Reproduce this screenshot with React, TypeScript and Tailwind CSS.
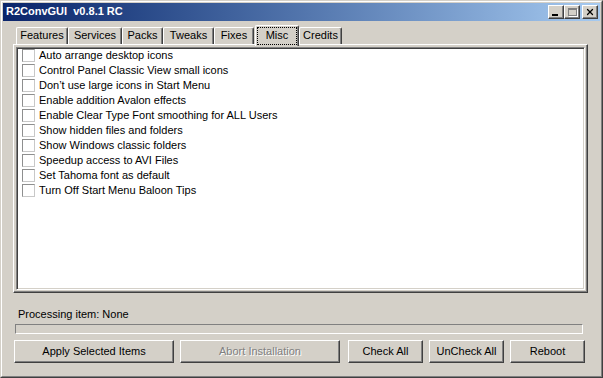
import { X } from 'lucide-react';

const TABS = ['Features', 'Services', 'Packs', 'Tweaks', 'Fixes', 'Misc', 'Credits'];
const TAB_WIDTHS: Record<string, string> = {
  Features: 'w-[52px]',
  Services: 'w-[54px]',
  Packs: 'w-[41px]',
  Tweaks: 'w-[51px]',
  Fixes: 'w-[40px]',
  Misc: 'w-[44px]',
  Credits: 'w-[43px]',
};

const ITEMS = [
  'Auto arrange desktop icons',
  'Control Panel Classic View small icons',
  'Don\u2019t use large icons in Start Menu',
  'Enable addition Avalon effects',
  'Enable Clear Type Font smoothing for ALL Users',
  'Show hidden files and folders',
  'Show Windows classic folders',
  'Speedup access to AVI Files',
  'Set Tahoma font as default',
  'Turn Off Start Menu Baloon Tips',
];

// raised 3d edge used by buttons
const raised =
  'border border-t-white border-l-white border-r-[#404040] border-b-[#404040] shadow-[inset_-1px_-1px_0_#808080,inset_1px_1px_0_#d4d0c8]';

function CaptionButton({ children }: { children: React.ReactNode }) {
  return (
    <div className={`w-[16px] h-[14px] bg-[#d4d0c8] flex items-center justify-center ${raised}`}>
      {children}
    </div>
  );
}

function Tab({ label, active }: { label: string; active?: boolean }) {
  if (active) {
    return (
      <div
        className={`${TAB_WIDTHS[label]} ml-[1px] h-[21px] -mb-[2px] relative z-10 bg-[#d4d0c8] border-t border-l border-white border-r border-r-[#404040] rounded-tl-[2px] rounded-tr-[2px] shadow-[inset_-1px_0_0_#808080] px-[1px] pt-[1px] pb-[1px] flex`}
      >
        <div className="flex-1 border border-dotted border-black flex items-center justify-center pb-[2px]">
          {label}
        </div>
      </div>
    );
  }
  return (
    <div
      className={`${TAB_WIDTHS[label]} h-[17px] bg-[#d4d0c8] border-t border-l border-white border-r border-r-[#404040] rounded-tl-[2px] rounded-tr-[2px] shadow-[inset_-1px_0_0_#808080] flex items-center justify-center pb-[1px]`}
    >
      {label}
    </div>
  );
}

function Button({ label, width, disabled }: { label: string; width: string; disabled?: boolean }) {
  return (
    <div
      className={`${width} h-[23px] bg-[#d4d0c8] flex items-center justify-center ${raised} ${
        disabled ? 'text-[#808080] [text-shadow:1px_1px_0_#ffffff]' : 'text-black'
      }`}
    >
      {label}
    </div>
  );
}

export default function App() {
  return (
    <div
      className="w-[603px] h-[378px] bg-[#d4d0c8] border border-t-[#d4d0c8] border-l-[#d4d0c8] border-r-[#404040] border-b-[#404040] text-[11px] text-black"
      style={{ fontFamily: '"Liberation Sans", Arial, sans-serif' }}
    >
      <div className="w-full h-full border border-t-white border-l-white border-r-[#808080] border-b-[#808080] p-[1px] flex flex-col">
        {/* Title bar */}
        <div className="h-[18px] bg-gradient-to-r from-[#0a246a] to-[#a6caf0] flex items-center pl-[3px] pr-[2px]">
          <span className="flex-1 text-white font-bold whitespace-pre leading-none pb-[1px]">R2ConvGUI  v0.8.1 RC</span>
          <CaptionButton>
            <div className="w-[6px] h-[2px] bg-black mt-[6px] -ml-[2px]" />
          </CaptionButton>
          <CaptionButton>
            <div className="w-[9px] h-[8px] border border-t-2 border-[#808080] shadow-[1px_1px_0_#ffffff] -mt-[1px]" />
          </CaptionButton>
          <div className="ml-[2px]">
            <CaptionButton>
              <X size={10} strokeWidth={3} className="text-black" />
            </CaptionButton>
          </div>
        </div>

        {/* Tabs */}
        <div className="flex items-end h-[19px] mt-[4px] ml-[13px]">
          {TABS.map((t) => (
            <Tab key={t} label={t} active={t === 'Misc'} />
          ))}
        </div>

        {/* Tab panel */}
        <div className="ml-[10px] w-[575px] h-[249px] border border-t-white border-l-white border-r-[#404040] border-b-[#404040] shadow-[inset_-1px_-1px_0_#808080,inset_1px_1px_0_#d4d0c8] p-[2px]">
          <div className="w-full h-full bg-white border border-t-[#808080] border-l-[#808080] border-r-white border-b-white shadow-[inset_1px_1px_0_#404040,inset_-1px_-1px_0_#d4d0c8] pl-[5px]">
            {ITEMS.map((item) => (
              <div key={item} className="h-[15px] flex items-center gap-[4px]">
                <div className="w-[13px] h-[13px] bg-white border border-[#8e8f8f] border-b-[#c8c8c8] border-r-[#c8c8c8]" />
                <span className="leading-none pb-[1px]">{item}</span>
              </div>
            ))}
          </div>
        </div>

        {/* Status */}
        <div className="ml-[15px] mt-[15px] h-[13px] leading-[13px]">Processing item: None</div>
        <div className="ml-[12px] mt-[3px] w-[568px] h-[10px] border border-t-[#808080] border-l-[#808080] border-r-white border-b-white" />

        {/* Buttons */}
        <div className="flex ml-[11px] mt-[6px]">
          <Button label="Apply Selected Items" width="w-[160px]" />
          <div className="ml-[6px]">
            <Button label="Abort Installation" width="w-[160px]" disabled />
          </div>
          <div className="ml-[8px]">
            <Button label="Check All" width="w-[75px]" />
          </div>
          <div className="ml-[6px]">
            <Button label="UnCheck All" width="w-[75px]" />
          </div>
          <div className="ml-[6px]">
            <Button label="Reboot" width="w-[75px]" />
          </div>
        </div>
      </div>
    </div>
  );
}
